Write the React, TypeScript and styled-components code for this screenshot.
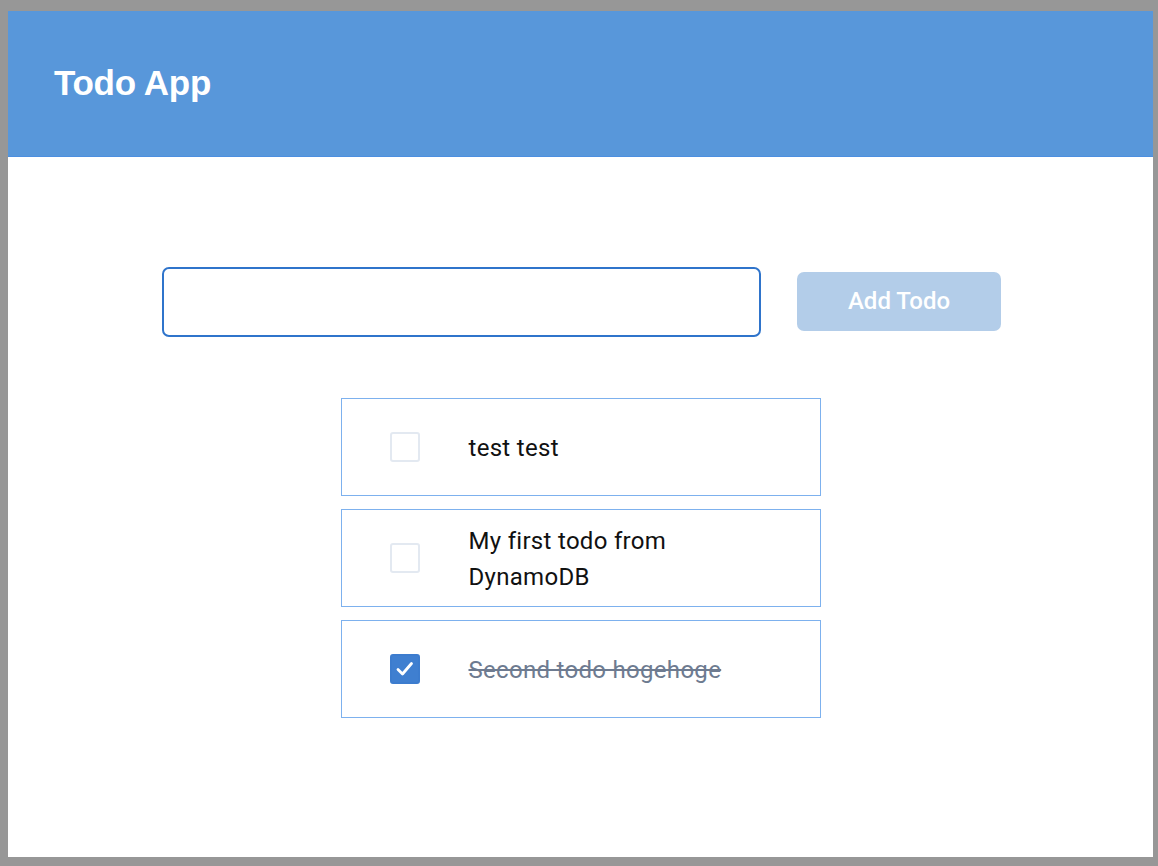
import React, { useState } from "react";
import styled, { createGlobalStyle } from "styled-components";

const Global = createGlobalStyle`
  html, body { margin: 0; padding: 0; }
  body {
    background: #979797;
    font-family: Roboto, "Liberation Sans", sans-serif;
  }
  * { box-sizing: border-box; }
`;

const Frame = styled.div`
  margin: 11px 5px 0 8px;
  height: 846px;
  background: #ffffff;
  display: flex;
  flex-direction: column;
`;

const Header = styled.header`
  height: 146px;
  background: #5897da;
  border-bottom: 1px solid #4c8fe0;
  display: flex;
  align-items: center;
  padding: 0 0 2px 46px;
`;

const Title = styled.h1`
  margin: 0;
  color: #ffffff;
  font-family: "Liberation Sans", Arial, sans-serif;
  font-weight: 700;
  font-size: 35px;
  letter-spacing: -0.3px;
`;

const Main = styled.main`
  display: flex;
  flex-direction: column;
  align-items: center;
  padding-top: 110px;
`;

const Form = styled.form`
  display: flex;
  align-items: center;
  gap: 36px;
  margin-left: 2px;
`;

const Input = styled.input`
  width: 599px;
  height: 70px;
  border: 2px solid #2f74cb;
  border-radius: 7px;
  outline: none;
  font-size: 21px;
  padding: 0 14px;
  font-family: Roboto, sans-serif;
`;

const Button = styled.button`
  width: 204px;
  height: 59px;
  border: none;
  border-radius: 7px;
  background: #b3cde9;
  color: #ffffff;
  font-family: Roboto, "Liberation Sans", sans-serif;
  font-weight: 500;
  font-size: 24px;
  padding: 0 0 2px;
  margin-top: -1px;
  cursor: default;
`;

const List = styled.ul`
  list-style: none;
  margin: 61px 0 0 0;
  padding: 0;
  display: flex;
  flex-direction: column;
  gap: 13px;
  width: 480px;
`;

const Item = styled.li`
  height: 98px;
  border: 1px solid #7db1ee;
  display: flex;
  align-items: center;
  padding-left: 48px;
`;

const Box = styled.span<{ $checked: boolean }>`
  width: 30px;
  height: 30px;
  flex: none;
  border-radius: 3px;
  border: 2px solid ${(p) => (p.$checked ? "#3c7cce" : "#e3e9f1")};
  background: ${(p) => (p.$checked ? "#3f7fd0" : "#ffffff")};
  display: flex;
  align-items: center;
  justify-content: center;
  margin-right: 49px;
`;

const Label = styled.span<{ $done: boolean }>`
  width: 280px;
  font-size: 24px;
  line-height: 36px;
  letter-spacing: 0.3px;
  padding-top: 2px;
  color: ${(p) => (p.$done ? "#6e7b90" : "#111111")};
  text-decoration: ${(p) => (p.$done ? "line-through" : "none")};
`;

const todos = [
  { id: 1, text: "test test", done: false },
  { id: 2, text: "My first todo from DynamoDB", done: false },
  { id: 3, text: "Second todo hogehoge", done: true },
];

export default function App() {
  const [value, setValue] = useState("");
  return (
    <>
      <Global />
      <Frame>
        <Header>
          <Title>Todo App</Title>
        </Header>
        <Main>
          <Form onSubmit={(e) => e.preventDefault()}>
            <Input value={value} onChange={(e) => setValue(e.target.value)} />
            <Button type="submit">Add Todo</Button>
          </Form>
          <List>
            {todos.map((t) => (
              <Item key={t.id}>
                <Box $checked={t.done}>
                  {t.done && (
                    <svg width="22" height="22" viewBox="0 0 22 22">
                      <path d="M4 11.5 L8.5 16 L17.5 5.5" fill="none" stroke="#fff" strokeWidth="2.8" strokeLinecap="round" strokeLinejoin="round" />
                    </svg>
                  )}
                </Box>
                <Label $done={t.done}>{t.text}</Label>
              </Item>
            ))}
          </List>
        </Main>
      </Frame>
    </>
  );
}
